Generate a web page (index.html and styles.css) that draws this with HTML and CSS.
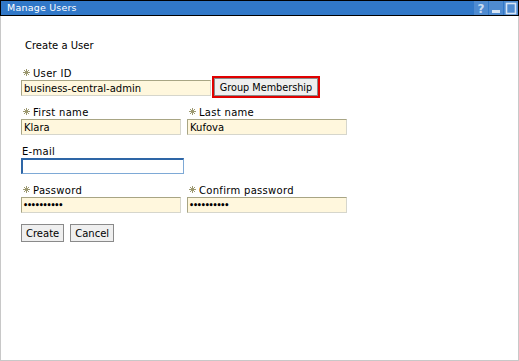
FILE: index.html
```html
<!DOCTYPE html>
<html>
<head>
<meta charset="utf-8">
<link rel="stylesheet" href="styles.css">
</head>
<body>
<div class="window">
  <div class="titlebar">
    <span class="title">Manage Users</span>
    <div class="tools">
      <span class="tool"><svg width="14" height="13" viewBox="0 0 14 13"><text x="7" y="11" text-anchor="middle" font-family="DejaVu Sans" font-size="12" font-weight="bold" fill="#c9dcf2">?</text></svg></span>
      <span class="tool"><svg width="14" height="13" viewBox="0 0 14 13"><rect x="3" y="8" width="8" height="3" fill="#d7e5f5"/></svg></span>
      <span class="tool"><svg width="14" height="13" viewBox="0 0 14 13"><rect x="2.5" y="1.5" width="9" height="10" fill="none" stroke="#d7e5f5" stroke-width="1.6"/></svg></span>
    </div>
  </div>
  <div class="content">
    <div class="heading">Create a User</div>
    <div class="row">
      <div class="field">
        <label class="lbl"><svg class="req" width="7" height="7" viewBox="0 0 7 7"><path d="M3.5 0V7M0 3.5H7M1 1L6 6M6 1L1 6" stroke="#9c9870" stroke-width="1"/></svg>User ID</label>
        <input class="inp w190" type="text" value="business-central-admin">
      </div>
      <div class="gm-wrap"><button class="btn gm">Group Membership</button></div>
    </div>
    <div class="row">
      <div class="field">
        <label class="lbl"><svg class="req" width="7" height="7" viewBox="0 0 7 7"><path d="M3.5 0V7M0 3.5H7M1 1L6 6M6 1L1 6" stroke="#9c9870" stroke-width="1"/></svg>First name</label>
        <input class="inp w161" type="text" value="Klara">
      </div>
      <div class="field">
        <label class="lbl"><svg class="req" width="7" height="7" viewBox="0 0 7 7"><path d="M3.5 0V7M0 3.5H7M1 1L6 6M6 1L1 6" stroke="#9c9870" stroke-width="1"/></svg>Last name</label>
        <input class="inp w160" type="text" value="Kufova">
      </div>
    </div>
    <div class="row">
      <div class="field">
        <label class="lbl plain">E-mail</label>
        <input class="inp email" type="text" value="">
      </div>
    </div>
    <div class="row">
      <div class="field">
        <label class="lbl"><svg class="req" width="7" height="7" viewBox="0 0 7 7"><path d="M3.5 0V7M0 3.5H7M1 1L6 6M6 1L1 6" stroke="#9c9870" stroke-width="1"/></svg>Password</label>
        <input class="inp w161 pw" type="password" value="aaaaaaaaaa">
      </div>
      <div class="field">
        <label class="lbl"><svg class="req" width="7" height="7" viewBox="0 0 7 7"><path d="M3.5 0V7M0 3.5H7M1 1L6 6M6 1L1 6" stroke="#9c9870" stroke-width="1"/></svg>Confirm password</label>
        <input class="inp w161 pw" type="password" value="aaaaaaaaaa">
      </div>
    </div>
    <div class="actions">
      <button class="btn small">Create</button>
      <button class="btn small">Cancel</button>
    </div>
  </div>
</div>
</body>
</html>
```
FILE: styles.css
```css
* { box-sizing: border-box; }
html, body { margin: 0; padding: 0; background: #fff; }
body { font-family: "DejaVu Sans", sans-serif; font-size: 10px; color: #000; }
.window { width: 519px; height: 361px; display: flex; flex-direction: column; }
.titlebar {
  height: 16px; border: 1px solid #000; background: #3178c8;
  display: flex; justify-content: space-between; align-items: center;
}
.title { color: #fff; font-size: 9.5px; letter-spacing: 0.2px; padding-left: 6px; line-height: 14px; }
.tools { display: flex; height: 14px; gap: 1px; }
.tool { width: 14px; height: 14px; background: #4f8bd0; display: flex; align-items: center; justify-content: center; }
.content {
  flex: 1; border: 1px solid #c8c8c8; border-top: none;
  padding: 24px 0 0 20px;
}
.heading { padding-left: 4px; line-height: 12px; margin-bottom: 16px; }
.row { display: flex; gap: 6px; align-items: flex-end; margin-bottom: 11px; }
.field { display: flex; flex-direction: column; }
.lbl { display: flex; align-items: center; line-height: 12px; height: 12px; padding-left: 2px; letter-spacing: 0.3px; }
.lbl.plain { padding-left: 1px; }
.req { margin-right: 3px; margin-top: -3px; }
.inp {
  height: 16px; font-family: "DejaVu Sans", sans-serif; font-size: 10px;
  padding: 0 2px; margin: 0; background: #fff7dd; color: #000;
  border: 1px solid; border-color: #a8a584 #d6d6cc #d6d6cc #a8a584;
  outline: none;
}
.pw { font-size: 8px; font-weight: bold; letter-spacing: -1.2px; padding-left: 1px; }
.w190 { width: 190px; }
.w161 { width: 160px; }
.w160 { width: 160px; }
.email { width: 163px; background: #fff; border-width: 2px 1px 1px 2px; border-color: #2e66a6 #7ea9d6 #7ea9d6 #2e66a6; }
.gm-wrap { border: 2px solid #e00000; margin-left: -5px; margin-bottom: -2px; }
.btn {
  font-family: "DejaVu Sans", sans-serif; font-size: 10px; color: #000;
  background: #efefef; border: 1px solid #8a8a8a; margin: 0; padding: 0 5px;
  display: block; white-space: nowrap;
}
.gm { height: 18px; width: 104px; padding: 0; font-size: 9.7px; }
.actions { display: flex; gap: 6px; margin-top: 1px; }
.small { height: 18px; padding: 0 4px; }
```
